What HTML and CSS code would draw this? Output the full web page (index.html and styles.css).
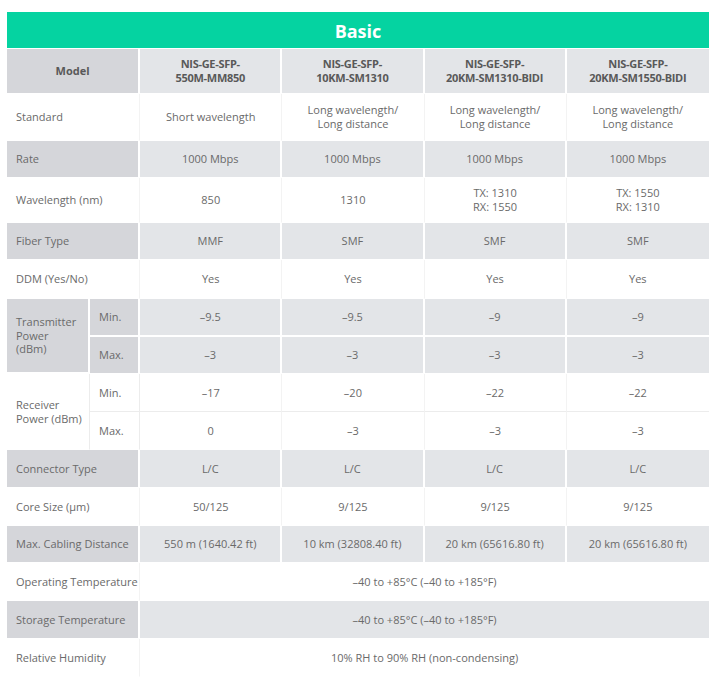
FILE: index.html
```html
<!DOCTYPE html>
<html lang="en">
<head>
<meta charset="utf-8">
<title>Basic</title>
<link rel="stylesheet" href="styles.css">
</head>
<body>
<div class="wrap">
<table class="spec">
  <colgroup>
    <col class="c-a"><col class="c-b"><col class="c-d"><col class="c-d"><col class="c-d"><col class="c-d">
  </colgroup>
  <thead>
    <tr class="title"><th colspan="6">Basic</th></tr>
    <tr class="head">
      <th colspan="2" class="lab">Model</th>
      <th>NIS-GE-SFP-<br>550M-MM850</th>
      <th>NIS-GE-SFP-<br>10KM-SM1310</th>
      <th>NIS-GE-SFP-<br>20KM-SM1310-BIDI</th>
      <th>NIS-GE-SFP-<br>20KM-SM1550-BIDI</th>
    </tr>
  </thead>
  <tbody>
    <tr class="w h47">
      <td colspan="2" class="lab">Standard</td>
      <td>Short wavelength</td>
      <td>Long wavelength/<br>Long distance</td>
      <td>Long wavelength/<br>Long distance</td>
      <td>Long wavelength/<br>Long distance</td>
    </tr>
    <tr class="g h37">
      <td colspan="2" class="lab">Rate</td>
      <td>1000 Mbps</td><td>1000 Mbps</td><td>1000 Mbps</td><td>1000 Mbps</td>
    </tr>
    <tr class="w h45">
      <td colspan="2" class="lab">Wavelength (nm)</td>
      <td>850</td><td>1310</td><td>TX: 1310<br>RX: 1550</td><td>TX: 1550<br>RX: 1310</td>
    </tr>
    <tr class="g h37">
      <td colspan="2" class="lab">Fiber Type</td>
      <td>MMF</td><td>SMF</td><td>SMF</td><td>SMF</td>
    </tr>
    <tr class="w h39">
      <td colspan="2" class="lab">DDM (Yes/No)</td>
      <td>Yes</td><td>Yes</td><td>Yes</td><td>Yes</td>
    </tr>
    <tr class="g h38 split">
      <td rowspan="2" class="lab grp">Transmitter<br>Power<br>(dBm)</td>
      <td class="lab sub">Min.</td>
      <td>–9.5</td><td>–9.5</td><td>–9</td><td>–9</td>
    </tr>
    <tr class="g h37">
      <td class="lab sub">Max.</td>
      <td>–3</td><td>–3</td><td>–3</td><td>–3</td>
    </tr>
    <tr class="w h38 split">
      <td rowspan="2" class="lab grp">Receiver<br>Power (dBm)</td>
      <td class="lab sub">Min.</td>
      <td>–17</td><td>–20</td><td>–22</td><td>–22</td>
    </tr>
    <tr class="w h38">
      <td class="lab sub">Max.</td>
      <td>0</td><td>–3</td><td>–3</td><td>–3</td>
    </tr>
    <tr class="g h38">
      <td colspan="2" class="lab">Connector Type</td>
      <td>L/C</td><td>L/C</td><td>L/C</td><td>L/C</td>
    </tr>
    <tr class="w h38">
      <td colspan="2" class="lab">Core Size (µm)</td>
      <td>50/125</td><td>9/125</td><td>9/125</td><td>9/125</td>
    </tr>
    <tr class="g h37">
      <td colspan="2" class="lab">Max. Cabling Distance</td>
      <td>550 m (1640.42 ft)</td><td>10 km (32808.40 ft)</td><td>20 km (65616.80 ft)</td><td>20 km (65616.80 ft)</td>
    </tr>
    <tr class="w h38">
      <td colspan="2" class="lab">Operating Temperature</td>
      <td colspan="4">–40 to +85°C (–40 to +185°F)</td>
    </tr>
    <tr class="g h38">
      <td colspan="2" class="lab">Storage Temperature</td>
      <td colspan="4">–40 to +85°C (–40 to +185°F)</td>
    </tr>
    <tr class="w h38">
      <td colspan="2" class="lab">Relative Humidity</td>
      <td colspan="4">10% RH to 90% RH (non-condensing)</td>
    </tr>
  </tbody>
</table>
</div>
</body>
</html>
```
FILE: styles.css
```css
html, body {
  margin: 0;
  padding: 0;
  background: #ffffff;
}
.wrap {
  padding: 12px 9px 0 7px;
}
.spec {
  width: 702px;
  table-layout: fixed;
  border-collapse: separate;
  border-spacing: 0;
  font-family: "Open Sans", "Noto Sans", "DejaVu Sans", sans-serif;
  font-size: 11px;
  line-height: 14px;
  color: #6a6a6a;
}
.c-a { width: 83px; }
.c-b { width: 50px; }
.c-d { width: 142px; }

.spec th, .spec td {
  box-sizing: border-box;
  padding: 0 6px;
  text-align: center;
  vertical-align: middle;
  border-right: 1px solid #ffffff;
  border-bottom: 1px solid #ffffff;
}
.spec tr > :last-child { border-right: 0; }

.title th {
  height: 37px;
  background: #05d3a1;
  color: #ffffff;
  font-size: 18px;
  font-weight: 700;
  line-height: 22px;
  padding-top: 1px;
}
.head th {
  height: 45px;
  background: #e3e5e8;
  color: #595959;
  font-weight: 700;
  font-size: 11px;
  letter-spacing: -0.3px;
  border-right-width: 2px;
}
.head th.lab {
  background: #d5d6da;
  letter-spacing: 0;
}
.head th:last-child { border-right: 0; }

.spec td.lab {
  text-align: left;
  padding-left: 9px;
  padding-right: 0;
  white-space: nowrap;
}
.spec td.grp {
  line-height: 13.5px;
}

.g td {
  background: #e3e5e8;
  border-right-width: 2px;
}
.g td.lab { background: #d5d6da; }
.g.split td { border-bottom-width: 2px; }

.w td {
  background: #ffffff;
  border-right-color: #f3f3f3;
  border-bottom-color: #ffffff;
}
.w.split td { border-bottom-color: #ececec; }
.w.split td.grp { border-bottom-color: #ffffff; }
.w td.grp { border-right-color: #ececec; }
.w td.sub { border-right-color: #ececec; }

.h37 td { height: 37px; }
.h38 td { height: 38px; }
.h39 td { height: 39px; }
.h45 td { height: 45px; }
.h47 td { height: 47px; }
.spec td[rowspan] { height: auto; }
```
